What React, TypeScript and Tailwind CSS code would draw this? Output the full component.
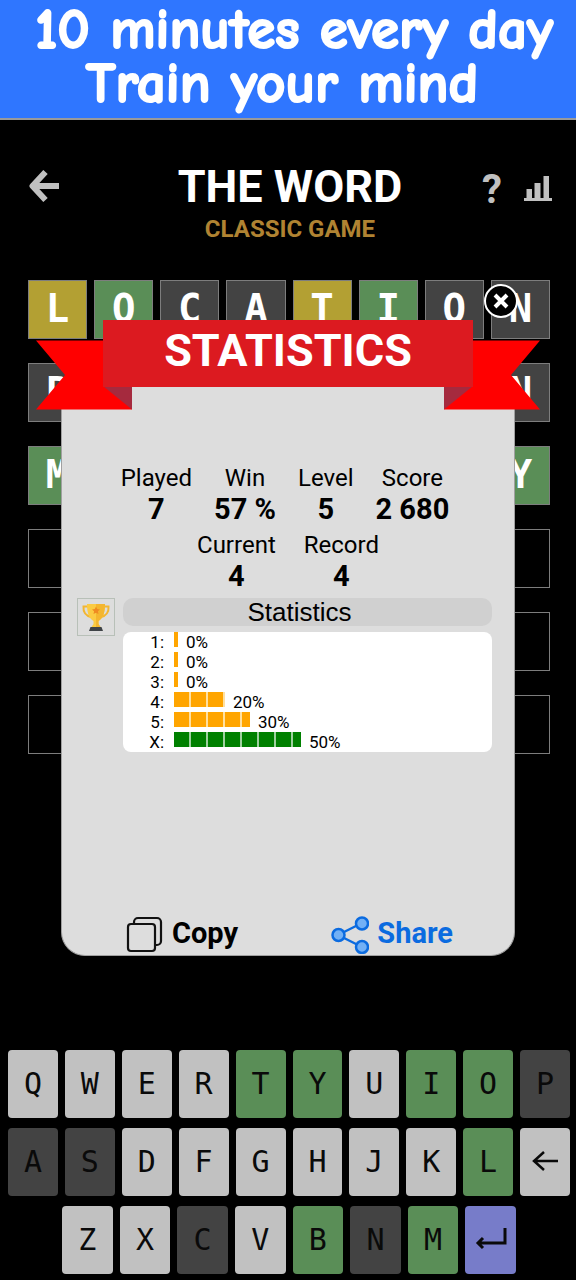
type State = 'miss' | 'near' | 'hit' | 'open' | 'enter'

const tileColors: Record<string, string> = {
  miss: 'bg-[#434343]',
  near: 'bg-[#b3a033]',
  hit: 'bg-[#5a8e57]',
  open: 'bg-black',
}

const keyColors: Record<State, string> = {
  miss: 'bg-[#434343]',
  near: 'bg-[#b3a033]',
  hit: 'bg-[#5a8e57]',
  open: 'bg-[#c1c1c1]',
  enter: 'bg-[#777cc9]',
}

const guesses: { word: string; states: State[] }[] = [
  { word: 'LOCATION', states: ['near', 'hit', 'miss', 'miss', 'near', 'hit', 'miss', 'miss'] },
  { word: 'P      N', states: ['miss', 'hit', 'miss', 'hit', 'near', 'hit', 'miss', 'miss'] },
  { word: 'M      Y', states: ['hit', 'hit', 'hit', 'hit', 'hit', 'hit', 'hit', 'hit'] },
  { word: '', states: [] },
  { word: '', states: [] },
  { word: '', states: [] },
]

const misses = 'PASCN'
const hits = 'TYIOLBM'

const totals = [
  { label: 'Played', value: '7' },
  { label: 'Win', value: '57 %' },
  { label: 'Level', value: '5' },
  { label: 'Score', value: '2 680' },
]

const streaks = [
  { label: 'Current', value: '4' },
  { label: 'Record', value: '4' },
]

const distribution = [
  { label: '1', percent: 0 },
  { label: '2', percent: 0 },
  { label: '3', percent: 0 },
  { label: '4', percent: 20 },
  { label: '5', percent: 30 },
  { label: 'X', percent: 50 },
]

function Banner() {
  return (
    <div className="border-b-2 border-[#9a9a9a] bg-[#2f76ff] pt-[3px] pb-[7px] pl-3 text-center font-['Comic_Sans_MS','Comic_Neue','Open_Sans',sans-serif] text-[57px] leading-[54px] font-bold text-white [-webkit-text-stroke:2px_white]">
      <p className="whitespace-nowrap">10 minutes every day</p>
      <p className="pr-6">Train your mind</p>
    </div>
  )
}

function Header() {
  return (
    <header className="grid grid-cols-[1fr_auto_1fr] items-start pt-10 pr-6 pl-7">
      <button aria-label="Back" className="mt-[10px] w-8 text-[#c0c0c0]">
        <svg viewBox="0 0 32 32" className="h-8 w-8" fill="none" stroke="currentColor" strokeWidth="6">
          <path d="M31 16H5M17.500 2L4.500 16L17.500 30" strokeLinejoin="round" />
        </svg>
      </button>
      <div className="text-center">
        <h1 className="text-[45px] leading-[54px] font-bold text-white">THE WORD</h1>
        <p className="text-2xl leading-[30px] font-bold text-[#b08332]">CLASSIC GAME</p>
      </div>
      <div className="mt-2 flex items-start justify-end gap-[22px] text-[#c0c0c0]">
        <button aria-label="Help" className="text-[40px] leading-[44px] font-bold">?</button>
        <button aria-label="Statistics" className="mt-2">
          <svg viewBox="0 0 28 26" className="h-[26px] w-7" fill="currentColor">
            <path d="M0 22h28v3H0zM2.500 13h5.500v9.500H2.500zM10.500 7h6v15.500h-6zM19.500 0h5.500v22.500h-5.500z" />
          </svg>
        </button>
      </div>
    </header>
  )
}

function Board() {
  return (
    <div className="mt-9 flex flex-col gap-6 pr-[26px] pl-7">
      {guesses.map((guess, row) => (
        <div key={row} className="grid grid-cols-8 gap-[7px]">
          {Array.from({ length: 8 }, (_, i) => (
            <div
              key={i}
              className={`flex h-[59px] items-center justify-center border border-[#7d7d7d] pb-0.5 font-['DejaVu_Sans_Mono',monospace] text-[39px] leading-none font-bold text-white ${tileColors[guess.states[i] ?? 'open']}`}
            >
              {guess.word[i]}
            </div>
          ))}
        </div>
      ))}
    </div>
  )
}

function RibbonTail({ className }: { className: string }) {
  return (
    <svg viewBox="0 0 96 90" className={`h-[90px] w-24 ${className}`}>
      <path d="M0 20.500H68V67L96 67V89.500H0L29 55Z" fill="#ff0000" />
      <path d="M67 66H96V89.500Z" fill="#a52a3e" />
    </svg>
  )
}

function Trophy() {
  return (
    <svg viewBox="0 0 36 36" className="h-9 w-9">
      <path d="M10 7.500H5.500C5 13 8 17 13 18M26 7.500H30.500C31 13 28 17 23 18" fill="none" stroke="#f2b632" strokeWidth="2" />
      <path d="M9 5H27C27 13 25.500 19 20.500 22V25L22.500 28H13.500L15.500 25V22C10.500 19 9 13 9 5Z" fill="#fbcb43" />
      <path d="M18 5H27C27 13 25.500 19 20.500 22V25L22.500 28H18Z" fill="#f4b62f" />
      <path d="M18 7.500l1.200 2.600 2.800.3-2.100 1.900.6 2.800-2.500-1.400-2.500 1.400.6-2.800-2.100-1.900 2.800-.3z" fill="#ef8b22" />
      <path d="M12.500 28H23.500L25 32H11Z" fill="#3f4347" />
    </svg>
  )
}

function Totals({ items, className }: { items: typeof totals; className: string }) {
  return (
    <dl className={`flex justify-center text-center ${className}`}>
      {items.map(item => (
        <div key={item.label}>
          <dt className="text-2xl leading-8">{item.label}</dt>
          <dd className="text-[29px] leading-[31px] font-bold">{item.value}</dd>
        </div>
      ))}
    </dl>
  )
}

function Distribution() {
  return (
    <ul className="mt-1.5 rounded-lg bg-white text-[17px] leading-5">
      {distribution.map(row => (
        <li key={row.label} className="flex h-5">
          <span className="w-[41px] text-right">{row.label}:</span>
          <span
            className={`mr-2 ml-2.5 h-[15px] ${
              row.label === 'X'
                ? 'bg-[repeating-linear-gradient(90deg,#008000_0_15px,#9fd09f_15px_17px)]'
                : 'bg-[repeating-linear-gradient(90deg,#ffa500_0_15px,#ffe0a0_15px_17px)]'
            }`}
            style={{ width: Math.max(4, Math.round(row.percent * 2.54)) }}
          />
          <span>{row.percent}%</span>
        </li>
      ))}
    </ul>
  )
}

function StatisticsDialog() {
  return (
    <section role="dialog" aria-labelledby="stats-title" className="absolute inset-x-9 top-[320px]">
      <button
        aria-label="Close"
        className="absolute -top-9 right-[22px] z-20 h-[34px] w-[34px] rounded-full border-2 border-white bg-black"
      >
        <svg viewBox="0 0 30 30" className="h-[30px] w-[30px]" stroke="#fff" strokeWidth="4">
          <path d="M9 9L21 21M21 9L9 21" />
        </svg>
      </button>
      <div className="relative z-10">
        <div className="flex justify-between">
          <RibbonTail className="" />
          <RibbonTail className="-scale-x-100" />
        </div>
        <h2
          id="stats-title"
          className="absolute inset-x-[67px] top-0 h-[67px] bg-[#dc1a20] pt-1 text-center text-[45px] leading-[54px] font-bold text-white"
        >
          STATISTICS
        </h2>
      </div>
      <div className="mx-[25px] -mt-6 flex min-h-[570px] flex-col rounded-b-3xl border border-t-0 border-[#a0a0a0] bg-[#dddddd] pt-[76px]">
        <Totals items={totals} className="gap-[22px] pr-1.5" />
        <div className="mt-1">
          <Totals items={streaks} className="gap-7" />
        </div>
        <div className="mt-1.5 mr-[22px] ml-[15px] flex items-start gap-2">
          <div className="border border-[#b8c0b8]">
            <Trophy />
          </div>
          <div className="flex-1">
            <h3 className="rounded-[10px] bg-[#d0d0d0] pr-4 text-center font-['Liberation_Sans',sans-serif] text-[26px] leading-7">
              Statistics
            </h3>
            <Distribution />
          </div>
        </div>
        <div className="mt-auto mb-px flex justify-between pr-[61px] pl-16 text-[29px] leading-[34px] font-bold">
          <button className="flex items-center gap-2">
            <svg viewBox="0 0 38 38" className="h-[38px] w-[38px]" fill="#dddddd" stroke="#111" strokeWidth="2.200">
              <rect x="8" y="2" width="27" height="27" rx="4" />
              <rect x="2" y="8" width="27" height="27" rx="3" />
            </svg>
            <span className="pb-1">Copy</span>
          </button>
          <button className="flex items-center gap-2 text-[#0b6be0]">
            <svg viewBox="0 0 38 38" className="h-[38px] w-[38px]" fill="#72b0f5" stroke="currentColor" strokeWidth="2.500">
              <path d="M7 19L31 7M7 19L31 31" />
              <circle cx="7.500" cy="19" r="6" />
              <circle cx="31" cy="7.500" r="6" />
              <circle cx="31" cy="31" r="6" />
            </svg>
            <span className="pb-1">Share</span>
          </button>
        </div>
      </div>
    </section>
  )
}

function Key({ letter }: { letter: string }) {
  const state: State = hits.includes(letter) ? 'hit' : misses.includes(letter) ? 'miss' : 'open'
  return (
    <button className={`flex h-[68px] items-center justify-center rounded ${keyColors[state]}`}>{letter}</button>
  )
}

function Keyboard() {
  return (
    <div className="mt-auto flex flex-col gap-2.5 pr-1.5 pb-1.5 pl-2 font-['DejaVu_Sans_Mono',monospace] text-[30px] leading-none text-[#0a0a0a]">
      <div className="grid grid-cols-10 gap-[7px]">
        {'QWERTYUIOP'.split('').map(letter => <Key key={letter} letter={letter} />)}
      </div>
      <div className="grid grid-cols-10 gap-[7px]">
        {'ASDFGHJKL'.split('').map(letter => <Key key={letter} letter={letter} />)}
        <button aria-label="Delete" className={`flex h-[68px] items-center justify-center rounded ${keyColors.open}`}>
          <svg viewBox="0 0 28 22" className="h-[22px] w-7" fill="none" stroke="currentColor" strokeWidth="2.500">
            <path d="M27 10H3M13 1L3 10L13 19" />
          </svg>
        </button>
      </div>
      <div className="grid grid-cols-8 gap-[7px] px-[54px]">
        {'ZXCVBNM'.split('').map(letter => <Key key={letter} letter={letter} />)}
        <button aria-label="Enter" className={`flex h-[68px] items-center justify-center rounded ${keyColors.enter}`}>
          <svg viewBox="0 0 32 24" className="h-6 w-8" fill="none" stroke="currentColor" strokeWidth="3">
            <path d="M30 0V15H3M8 10L3 15L8 20" />
          </svg>
        </button>
      </div>
    </div>
  )
}

export default function App() {
  return (
    <main className="relative flex min-h-screen flex-col bg-black font-[Roboto,sans-serif] text-black">
      <Banner />
      <Header />
      <Board />
      <StatisticsDialog />
      <Keyboard />
    </main>
  )
}
